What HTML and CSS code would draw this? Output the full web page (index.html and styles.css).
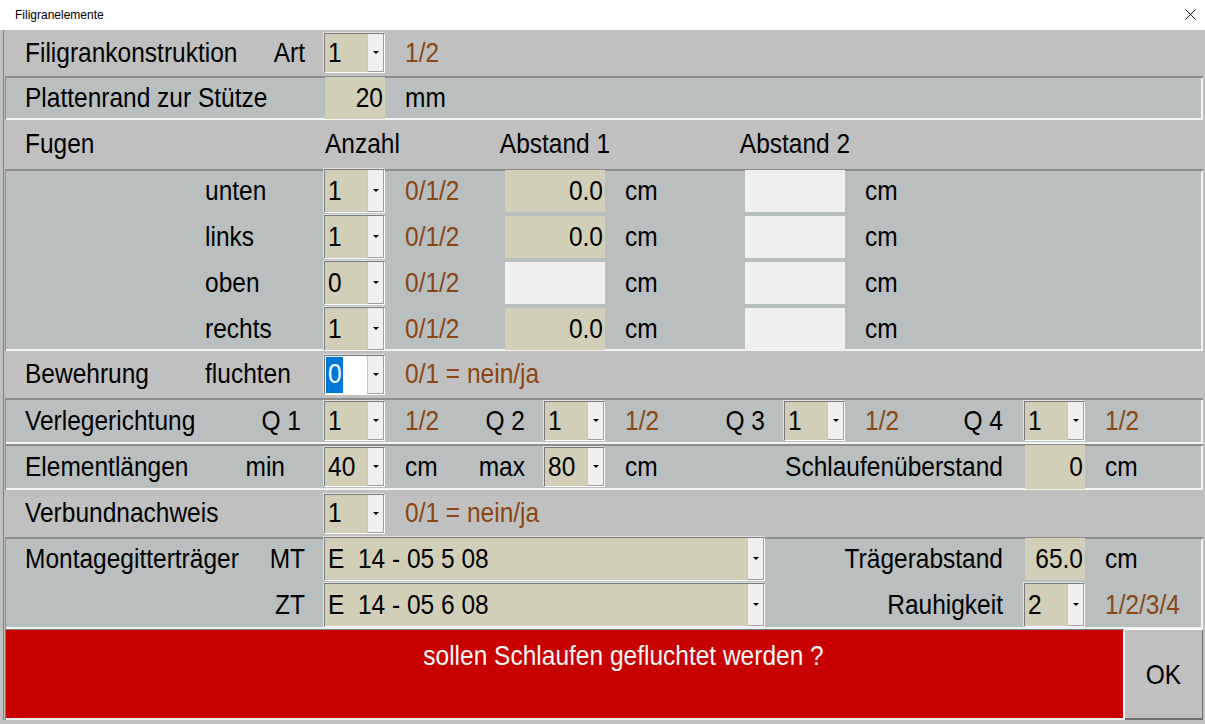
FILE: index.html
```html
<!DOCTYPE html>
<html lang="de">
<head>
<meta charset="utf-8">
<title>Filigranelemente</title>
<link rel="stylesheet" href="styles.css">
</head>
<body>
<div class="window">
  <div class="titlebar">
    <span class="title">Filigranelemente</span>
    <svg class="close" width="11" height="11" viewBox="0 0 11 11"><path d="M0.5 0.5 L10.5 10.5 M10.5 0.5 L0.5 10.5" stroke="#111" stroke-width="1" fill="none"/></svg>
  </div>
  <div class="client">
    <div class="frame">
      <div class="row h46">
        <span class="c2">Filigrankonstruktion</span>
        <span class="e16">Art</span>
        <div class="combo k17"><span class="cv"><span>1</span></span><span class="cb"></span></div>
        <span class="c21 br">1/2</span>
      </div>
      <div class="row panel h44">
        <span class="c2">Plattenrand zur Stütze</span>
        <div class="field f17"><span>20</span></div>
        <span class="c21">mm</span>
      </div>
      <div class="row h49">
        <span class="c2">Fugen</span>
        <span class="c17">Anzahl</span>
        <span class="m26">Abstand 1</span>
        <span class="m38">Abstand 2</span>
      </div>
      <div class="panel fugen">
        <div class="row sub fill">
          <span class="c11">unten</span>
          <div class="combo k17"><span class="cv"><span>1</span></span><span class="cb"></span></div>
          <span class="c21 br">0/1/2</span>
          <div class="field f26"><span>0.0</span></div>
          <span class="c32">cm</span>
          <div class="field empty f38"></div>
          <span class="c44">cm</span>
        </div>
        <div class="row sub fill">
          <span class="c11">links</span>
          <div class="combo k17"><span class="cv"><span>1</span></span><span class="cb"></span></div>
          <span class="c21 br">0/1/2</span>
          <div class="field f26"><span>0.0</span></div>
          <span class="c32">cm</span>
          <div class="field empty f38"></div>
          <span class="c44">cm</span>
        </div>
        <div class="row sub fill">
          <span class="c11">oben</span>
          <div class="combo k17"><span class="cv"><span>0</span></span><span class="cb"></span></div>
          <span class="c21 br">0/1/2</span>
          <div class="field empty f26"></div>
          <span class="c32">cm</span>
          <div class="field empty f38"></div>
          <span class="c44">cm</span>
        </div>
        <div class="row sub fill">
          <span class="c11">rechts</span>
          <div class="combo k17"><span class="cv"><span>1</span></span><span class="cb"></span></div>
          <span class="c21 br">0/1/2</span>
          <div class="field f26"><span>0.0</span></div>
          <span class="c32">cm</span>
          <div class="field empty f38"></div>
          <span class="c44">cm</span>
        </div>
      </div>
      <div class="row h47">
        <span class="c2">Bewehrung</span>
        <span class="c11">fluchten</span>
        <div class="combo k17"><span class="cv white"><span class="sel">0</span></span><span class="cb"></span></div>
        <span class="c21 br">0/1 = nein/ja</span>
      </div>
      <div class="row panel h46">
        <span class="c2">Verlegerichtung</span>
        <span class="e16 pr4">Q 1</span>
        <div class="combo k17"><span class="cv"><span>1</span></span><span class="cb"></span></div>
        <span class="c21 br">1/2</span>
        <span class="e27">Q 2</span>
        <div class="combo k28"><span class="cv"><span>1</span></span><span class="cb"></span></div>
        <span class="c32 br">1/2</span>
        <span class="e39">Q 3</span>
        <div class="combo k40"><span class="cv"><span>1</span></span><span class="cb"></span></div>
        <span class="c44 br">1/2</span>
        <span class="e51">Q 4</span>
        <div class="combo k52"><span class="cv"><span>1</span></span><span class="cb"></span></div>
        <span class="c56 br">1/2</span>
      </div>
      <div class="row panel h46">
        <span class="c2">Elementlängen</span>
        <span class="e15">min</span>
        <div class="combo k17"><span class="cv"><span>40</span></span><span class="cb"></span></div>
        <span class="c21">cm</span>
        <span class="e27">max</span>
        <div class="combo k28"><span class="cv"><span>80</span></span><span class="cb"></span></div>
        <span class="c32">cm</span>
        <span class="e51">Schlaufenüberstand</span>
        <div class="field f52"><span>0</span></div>
        <span class="c56">cm</span>
      </div>
      <div class="row h47">
        <span class="c2">Verbundnachweis</span>
        <div class="combo k17"><span class="cv"><span>1</span></span><span class="cb"></span></div>
        <span class="c21 br">0/1 = nein/ja</span>
      </div>
      <div class="panel montage">
        <div class="row sub2 fill">
          <span class="c2">Montagegitterträger</span>
          <span class="e16">MT</span>
          <div class="combo w17"><span class="cv pre"><span>E  14 - 05 5 08</span></span><span class="cb"></span></div>
          <span class="e51">Trägerabstand</span>
          <div class="field f52"><span>65.0</span></div>
          <span class="c56">cm</span>
        </div>
        <div class="row sub2 fill">
          <span class="e16">ZT</span>
          <div class="combo w17"><span class="cv pre"><span>E  14 - 05 6 08</span></span><span class="cb"></span></div>
          <span class="e51">Rauhigkeit</span>
          <div class="combo k52"><span class="cv"><span>2</span></span><span class="cb"></span></div>
          <span class="c56 br">1/2/3/4</span>
        </div>
      </div>
      <div class="bottom">
        <div class="msg"><span>sollen Schlaufen gefluchtet werden ?</span></div>
        <button class="ok"><span>OK</span></button>
      </div>
    </div>
  </div>
</div>
</body>
</html>
```

FILE: styles.css
```css
* { box-sizing: border-box; }
html, body { margin: 0; padding: 0; }
body {
  width: 1205px;
  height: 724px;
  overflow: hidden;
  background: #c0c0c0;
  font-family: "Liberation Sans", Arial, sans-serif;
}
.window {
  width: 1205px;
  height: 724px;
  display: flex;
  flex-direction: column;
}
.titlebar {
  height: 30px;
  flex: none;
  background: #fff;
  display: flex;
  align-items: center;
  justify-content: space-between;
  padding: 0 9px 1px 15px;
}
.title { font-size: 12px; color: #000; }
.close { display: block; }

.client {
  flex: 1;
  background: #c0c0c0;
  padding: 0 2px 4px 3px;
}
.frame {
  height: 100%;
  border-left: 1px solid #7e7e7e;
  padding-left: 1px;
  display: flex;
  flex-direction: column;
}

.row {
  display: grid;
  grid-template-columns: repeat(60, 20px);
  grid-template-rows: 100%;
  align-items: center;
  font-size: 24.5px;
  color: #000;
  white-space: nowrap;
  flex: none;
}
.row > * { grid-row: 1; }
.row > span,
.cv > span,
.field > span,
.msg > span,
.ok > span {
  display: inline-block;
  line-height: 1;
  transform: scaleY(1.13);
}
.h44 { height: 44px; }
.h46 { height: 46px; }
.h47 { height: 47px; }
.h49 { height: 49px; }

.panel {
  background: #b9bfbf;
  box-shadow: inset 1px 2px 0 #8c8c8c, inset -2px -2px 0 #f4f4f4;
  flex: none;
}
.fugen {
  height: 182px;
  display: flex;
  flex-direction: column;
  gap: 2px;
}
.sub { height: 44px; }
.montage {
  height: 92px;
  display: flex;
  flex-direction: column;
  gap: 2px;
  padding-bottom: 2px;
}
.sub2 { height: 44px; }

.br { color: #8b4513; }

/* column placement on the 20px grid */
.c2  { grid-column: 2 / 11; }
.c11 { grid-column: 11 / 16; }
.c17 { grid-column: 17 / 21; }
.c21 { grid-column: 21 / 26; }
.c32 { grid-column: 32 / 37; }
.c44 { grid-column: 44 / 49; }
.c56 { grid-column: 56 / 61; }
.e15 { grid-column: 11 / 15; justify-self: end; }
.e16 { grid-column: 11 / 16; justify-self: end; }
.e27 { grid-column: 22 / 27; justify-self: end; }
.e39 { grid-column: 34 / 39; justify-self: end; }
.e51 { grid-column: 40 / 51; justify-self: end; padding-right: 2px; }
.pr4 { padding-right: 4px; }
.m26 { grid-column: 26 / 31; justify-self: center; }
.m38 { grid-column: 38 / 43; justify-self: center; }
.k17 { grid-column: 17 / 20; }
.k28 { grid-column: 28 / 31; }
.k40 { grid-column: 40 / 43; }
.k52 { grid-column: 52 / 55; }
.w17 { grid-column: 17 / 39; }
.f17 { grid-column: 17 / 20; }
.f26 { grid-column: 26 / 31; }
.f38 { grid-column: 38 / 43; }
.f52 { grid-column: 52 / 55; }

/* combo box */
.combo {
  height: 40px;
  margin-left: -1px;
  display: flex;
  border: 1px solid;
  border-color: #7a7a7a #fff #fff #7a7a7a;
  box-shadow: -1px -1px 0 #e2e2e2;
  background: #d1cfb8;
}
.fill .combo { height: 100%; align-self: stretch; }
.cv {
  flex: 1;
  min-width: 0;
  display: flex;
  align-items: center;
  padding-left: 3px;
  background: #d1cfb8;
  font-size: 24.5px;
  overflow: hidden;
}
.cv.white { background: #fff; padding-left: 1px; }
.cv.pre { white-space: pre; }
.sel {
  background: #0078d7;
  color: #fff;
  height: 32px;
  padding: 3px 1px 0 2px;
}
.cb {
  width: 17px;
  flex: none;
  background: #f0f0f0;
  border-left: 1px solid #c8c8c8;
  border-right: 1px solid #a0a0a0;
  border-bottom: 1px solid #a0a0a0;
  display: flex;
  align-items: center;
  justify-content: center;
}
.cb::after {
  content: "";
  width: 0;
  height: 0;
  border-left: 3px solid transparent;
  border-right: 3px solid transparent;
  border-top: 3px solid #000;
}

/* edit field */
.field {
  align-self: stretch;
  background: #d1cfb8;
  display: flex;
  align-items: center;
  justify-content: flex-end;
  padding-right: 2px;
  margin: 1px 0;
  font-size: 24.5px;
}
.field.empty { background: #f0f0f0; }

/* bottom message + OK */
.bottom {
  height: 91px;
  flex: none;
  display: flex;
}
.msg {
  flex: 1;
  background: #c80000;
  color: #f6f6f6;
  font-size: 24.5px;
  text-align: center;
  padding: 13px 0 0 118px;
  box-shadow: inset 1px 1px 0 #7a7a7a, inset -1px -2px 0 #f0f0f0;
}
.ok {
  width: 79px;
  flex: none;
  background: #c0c0c0;
  border: none;
  margin: 0;
  padding: 0;
  font-family: "Liberation Sans", Arial, sans-serif;
  font-size: 24.5px;
  color: #000;
  box-shadow: inset 1px 1px 0 #fff, inset -1px -2px 0 #6e6e6e;
}
```
